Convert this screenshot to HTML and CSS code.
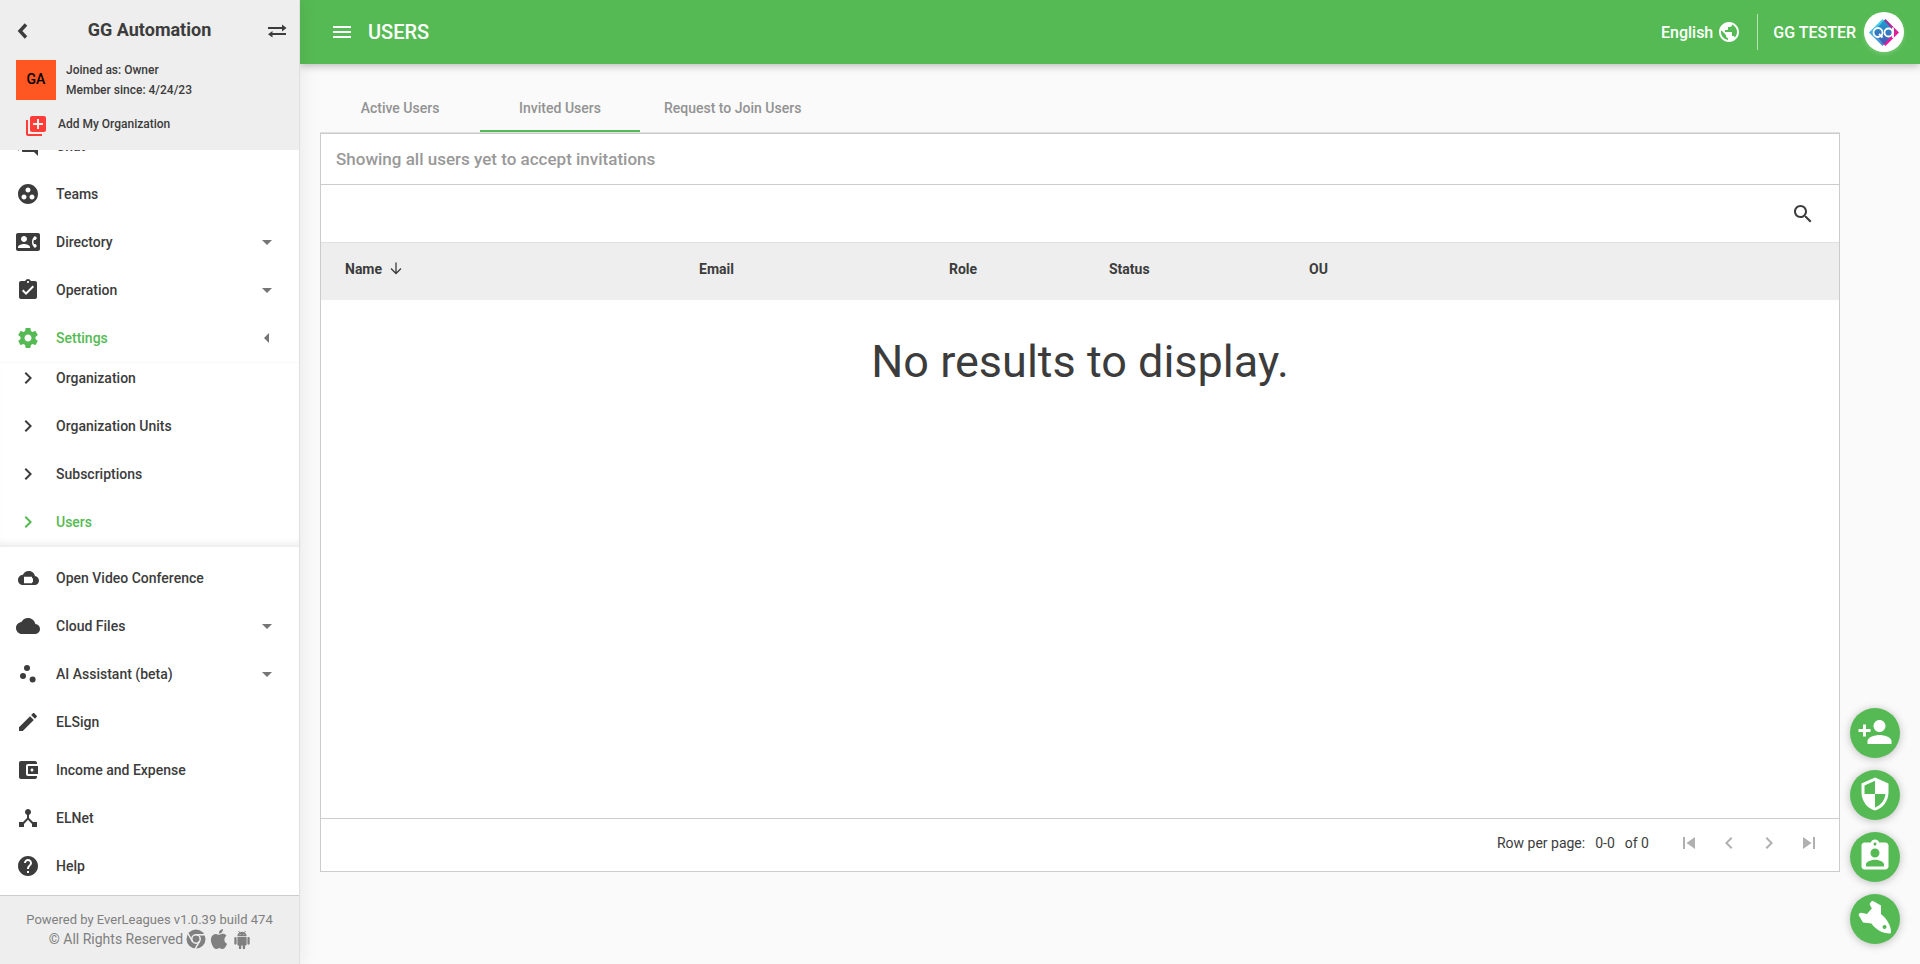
FILE: index.html
```html
<!DOCTYPE html>
<html lang="en">
<head>
<meta charset="utf-8">
<title>Users</title>
<link rel="stylesheet" href="styles.css">
</head>
<body>
<div class="app">
  <aside class="sidebar">
    <div class="org">
      <div class="org-bar">
        <button class="icon-btn" aria-label="Back"><svg class="icon" viewBox="0 0 24 24"><path class="stroke-bold" d="M16 5.500L10 12l6 6.500"/></svg></button>
        <h2 class="org-name">GG Automation</h2>
        <button class="icon-btn" aria-label="Switch organization"><svg class="icon" viewBox="0 0 24 24"><path d="M3 8h14V5.500L21.500 9 17 12.500V10H3zM21 14H7.500v-2L3 15.200l4.500 3.300V16H21z"/></svg></button>
      </div>
      <div class="org-info">
        <span class="org-badge">GA</span>
        <div class="org-lines"><span>Joined as: Owner</span><span>Member since: 4/24/23</span></div>
      </div>
      <button class="add-org">
        <svg class="icon red" viewBox="0 0 24 24"><path d="M4 6H2v14c0 1.100.9 2 2 2h14v-2H4V6zm16-4H8c-1.100 0-2 .9-2 2v12c0 1.100.9 2 2 2h12c1.100 0 2-.9 2-2V4c0-1.100-.9-2-2-2zm-1 9h-4v4h-2v-4H9V9h4V5h2v4h4v2z"/></svg>
        <span>Add My Organization</span>
      </button>
    </div>
    <nav class="nav">
      <div class="nav-list">
        <a class="nav-item" href="#"><svg class="icon" viewBox="0 0 24 24"><path d="M21 6h-2v9H6v2c0 .55.45 1 1 1h11l4 4V7c0-.55-.45-1-1-1zm-4 6V3c0-.55-.45-1-1-1H3c-.55 0-1 .45-1 1v14l4-4h10c.55 0 1-.45 1-1z"/></svg><span class="label">Chat</span></a>
        <a class="nav-item" href="#"><svg class="icon" viewBox="0 0 24 24"><path d="M12 2C6.480 2 2 6.480 2 12s4.480 10 10 10 10-4.480 10-10S17.520 2 12 2zM8 17.500c-1.380 0-2.500-1.120-2.500-2.500s1.120-2.500 2.500-2.500 2.500 1.120 2.500 2.500-1.120 2.500-2.500 2.500zM9.500 8c0-1.380 1.120-2.500 2.500-2.500s2.500 1.120 2.500 2.500-1.120 2.500-2.500 2.500S9.500 9.380 9.500 8zm6.500 9.500c-1.380 0-2.500-1.120-2.500-2.500s1.120-2.500 2.500-2.500 2.500 1.120 2.500 2.500-1.120 2.500-2.500 2.500z"/></svg><span class="label">Teams</span></a>
        <a class="nav-item" href="#"><svg class="icon" viewBox="0 0 24 24"><path d="M22 3H2C.9 3 0 3.900 0 5v14c0 1.100.9 2 2 2h20c1.100 0 1.990-.9 1.990-2L24 5c0-1.100-.9-2-2-2zM8 6c1.660 0 3 1.340 3 3s-1.340 3-3 3-3-1.340-3-3 1.340-3 3-3zm6 12H2v-1c0-2 4-3.100 6-3.100s6 1.100 6 3.100v1zm3.850-4h1.640L21 16l-1.990 1.990c-1.310-.98-2.280-2.380-2.730-3.990-.18-.64-.28-1.310-.28-2s.1-1.360.28-2c.45-1.620 1.420-3.010 2.730-3.990L21 8l-1.510 2h-1.640c-.22.63-.35 1.300-.35 2s.13 1.370.35 2z"/></svg><span class="label">Directory</span><svg class="icon arrow" viewBox="0 0 24 24"><path d="M7 10l5 5 5-5z"/></svg></a>
        <a class="nav-item" href="#"><svg class="icon" viewBox="0 0 24 24"><path d="M19 3h-4.180C14.400 1.840 13.300 1 12 1c-1.300 0-2.400.84-2.820 2H5c-1.100 0-2 .9-2 2v14c0 1.100.9 2 2 2h14c1.100 0 2-.9 2-2V5c0-1.100-.9-2-2-2zm-7 0c.55 0 1 .45 1 1s-.45 1-1 1-1-.45-1-1 .45-1 1-1zm-2 14l-4-4 1.410-1.410L10 14.170l6.590-6.590L18 9l-8 8z"/></svg><span class="label">Operation</span><svg class="icon arrow" viewBox="0 0 24 24"><path d="M7 10l5 5 5-5z"/></svg></a>
        <a class="nav-item active" href="#"><svg class="icon" viewBox="0 0 24 24"><path d="M19.430 12.980c.04-.32.070-.64.070-.98s-.03-.66-.07-.98l2.110-1.650c.19-.15.240-.42.120-.64l-2-3.460c-.12-.22-.39-.3-.61-.22l-2.490 1c-.52-.4-1.080-.73-1.690-.98l-.38-2.650C14.460 2.180 14.250 2 14 2h-4c-.25 0-.46.180-.49.420l-.38 2.650c-.61.250-1.170.590-1.690.98l-2.490-1c-.23-.09-.49 0-.61.220l-2 3.460c-.13.220-.07.490.12.640l2.110 1.650c-.04.320-.07.650-.07.980s.03.660.07.980l-2.110 1.650c-.19.150-.24.420-.12.640l2 3.460c.12.220.39.300.61.220l2.490-1c.52.400 1.080.730 1.690.980l.38 2.650c.03.240.24.420.49.420h4c.25 0 .46-.18.490-.42l.38-2.650c.61-.25 1.170-.59 1.690-.98l2.490 1c.23.090.49 0 .61-.22l2-3.460c.12-.22.070-.49-.12-.64l-2.110-1.650zM12 15.500c-1.930 0-3.500-1.570-3.500-3.500s1.570-3.500 3.500-3.500 3.500 1.570 3.500 3.500-1.570 3.500-3.500 3.500z"/></svg><span class="label">Settings</span><svg class="icon arrow" viewBox="0 0 24 24"><path d="M14 7l-5 5 5 5z"/></svg></a>
        <div class="subnav">
          <a class="sub-item" href="#"><svg class="icon" viewBox="0 0 24 24"><path d="M10 6L8.590 7.410 13.170 12l-4.580 4.590L10 18l6-6z"/></svg><span class="label">Organization</span></a>
          <a class="sub-item" href="#"><svg class="icon" viewBox="0 0 24 24"><path d="M10 6L8.590 7.410 13.170 12l-4.580 4.590L10 18l6-6z"/></svg><span class="label">Organization Units</span></a>
          <a class="sub-item" href="#"><svg class="icon" viewBox="0 0 24 24"><path d="M10 6L8.590 7.410 13.170 12l-4.580 4.590L10 18l6-6z"/></svg><span class="label">Subscriptions</span></a>
          <a class="sub-item active" href="#"><svg class="icon" viewBox="0 0 24 24"><path d="M10 6L8.590 7.410 13.170 12l-4.580 4.590L10 18l6-6z"/></svg><span class="label">Users</span></a>
        </div>
        <a class="nav-item" href="#"><svg class="icon" viewBox="0 0 24 24"><path fill-rule="evenodd" d="M18.900 9.900C18.300 6.900 15.600 5 12.600 5c-2.600 0-4.700 1.600-5.700 3.700C4 8.900 2 11.300 2 13.900 2 16.900 4.300 19 7.200 19h11.500c2.400 0 4.300-2 4.300-4.500 0-2.400-1.800-4.400-4.100-4.600zM8 10.700h8v2l1-1v5l-1-1v1.500H8z"/></svg><span class="label">Open Video Conference</span></a>
        <a class="nav-item" href="#"><svg class="icon" viewBox="0 0 24 24"><path d="M19.350 10.040C18.670 6.590 15.640 4 12 4 9.110 4 6.600 5.640 5.350 8.040 2.340 8.360 0 10.910 0 14c0 3.310 2.690 6 6 6h13c2.760 0 5-2.240 5-5 0-2.640-2.050-4.780-4.650-4.960z"/></svg><span class="label">Cloud Files</span><svg class="icon arrow" viewBox="0 0 24 24"><path d="M7 10l5 5 5-5z"/></svg></a>
        <a class="nav-item" href="#"><svg class="icon" viewBox="0 0 24 24"><circle cx="7" cy="14" r="3"/><circle cx="11" cy="6" r="3"/><circle cx="16.600" cy="17.600" r="3"/></svg><span class="label">AI Assistant (beta)</span><svg class="icon arrow" viewBox="0 0 24 24"><path d="M7 10l5 5 5-5z"/></svg></a>
        <a class="nav-item" href="#"><svg class="icon" viewBox="0 0 24 24"><path d="M3 17.250V21h3.750L17.810 9.940l-3.750-3.750L3 17.250zM20.710 7.040c.39-.39.390-1.020 0-1.410l-2.340-2.340c-.39-.39-1.020-.39-1.410 0l-1.830 1.830 3.750 3.750 1.830-1.830z"/></svg><span class="label">ELSign</span></a>
        <a class="nav-item" href="#"><svg class="icon" viewBox="0 0 24 24"><path d="M21 18v1c0 1.100-.9 2-2 2H5c-1.110 0-2-.9-2-2V5c0-1.100.89-2 2-2h14c1.100 0 2 .9 2 2v1h-9c-1.110 0-2 .9-2 2v8c0 1.100.89 2 2 2h9zm-9-2h10V8H12v8zm4-2.500c-.83 0-1.500-.67-1.500-1.500s.67-1.500 1.500-1.500 1.500.67 1.500 1.500-.67 1.500-1.500 1.500z"/></svg><span class="label">Income and Expense</span></a>
        <a class="nav-item" href="#"><svg class="icon" viewBox="0 0 24 24"><path d="M17 16l-4-4V8.820C14.160 8.400 15 7.300 15 6c0-1.660-1.340-3-3-3S9 4.340 9 6c0 1.300.84 2.400 2 2.820V12l-4 4H3v5h5v-3.050l4-4.200 4 4.200V21h5v-5h-4z"/></svg><span class="label">ELNet</span></a>
        <a class="nav-item" href="#"><svg class="icon" viewBox="0 0 24 24"><path d="M12 2C6.480 2 2 6.480 2 12s4.480 10 10 10 10-4.480 10-10S17.520 2 12 2zm1 17h-2v-2h2v2zm2.070-7.750l-.9.92C13.450 12.900 13 13.500 13 15h-2v-.5c0-1.100.45-2.100 1.170-2.830l1.240-1.260c.37-.36.590-.86.590-1.410 0-1.100-.9-2-2-2s-2 .9-2 2H8c0-2.210 1.790-4 4-4s4 1.790 4 4c0 .88-.36 1.680-.93 2.250z"/></svg><span class="label">Help</span></a>
      </div>
    </nav>
    <footer class="side-foot">
      <div>Powered by EverLeagues v1.0.39 build 474</div>
      <div class="rights">
        <span>© All Rights Reserved</span>
        <svg class="brand" viewBox="0 0 20 20"><circle cx="10" cy="10" r="9.500"/><g class="gaps"><circle cx="10" cy="10" r="4.200"/><path d="M10 5.800h9M13.640 12.100l-4.500 7.790M6.360 12.100l-4.500-7.790"/></g></svg>
        <svg class="brand" viewBox="2 2 20 20"><path d="M18.710 19.500C17.880 20.740 17 21.950 15.660 21.970C14.320 22 13.890 21.180 12.370 21.180C10.840 21.180 10.370 21.950 9.100 22C7.790 22.050 6.800 20.680 5.960 19.470C4.250 17 2.940 12.450 4.700 9.390C5.570 7.870 7.130 6.910 8.820 6.880C10.100 6.860 11.320 7.750 12.110 7.750C12.890 7.750 14.370 6.680 15.920 6.840C16.570 6.870 18.390 7.100 19.560 8.820C19.470 8.880 17.390 10.100 17.410 12.630C17.440 15.650 20.060 16.660 20.090 16.670C20.060 16.740 19.670 18.110 18.710 19.500M13 3.500C13.730 2.670 14.940 2.040 15.940 2C16.070 3.170 15.600 4.350 14.900 5.190C14.210 6.040 13.070 6.700 11.950 6.610C11.800 5.460 12.360 4.260 13 3.500Z"/></svg>
        <svg class="brand" viewBox="-1 -2.500 26 26"><path d="M6 18c0 .55.45 1 1 1h1v3.500c0 .83.67 1.500 1.500 1.500s1.500-.67 1.500-1.500V19h2v3.500c0 .83.67 1.500 1.500 1.500s1.500-.67 1.500-1.500V19h1c.55 0 1-.45 1-1V8H6v10zM3.500 8C2.670 8 2 8.670 2 9.500v7c0 .83.67 1.500 1.500 1.500S5 17.330 5 16.500v-7C5 8.670 4.330 8 3.500 8zm17 0c-.83 0-1.500.67-1.500 1.500v7c0 .83.67 1.500 1.500 1.500s1.500-.67 1.500-1.500v-7c0-.83-.67-1.500-1.500-1.500zm-4.970-5.840l1.300-1.300c.2-.2.200-.51 0-.71-.2-.2-.51-.2-.71 0l-1.480 1.480C13.850 1.230 12.950 1 12 1c-.96 0-1.860.23-2.660.63L7.850.15c-.2-.2-.51-.2-.71 0-.2.200-.2.510 0 .71l1.310 1.310C6.970 3.260 6 5.010 6 7h12c0-1.990-.97-3.750-2.470-4.840zM10 5H9V4h1v1zm5 0h-1V4h1v1z"/></svg>
      </div>
    </footer>
  </aside>

  <div class="page">
    <header class="topbar">
      <button class="icon-btn" aria-label="Toggle menu"><svg class="icon" viewBox="0 0 24 24"><path d="M3 18h18v-2H3v2zm0-5h18v-2H3v2zm0-7v2h18V6H3z"/></svg></button>
      <h1 class="page-title">USERS</h1>
      <button class="language"><span>English</span><svg class="icon" viewBox="0 0 24 24"><path d="M12 2C6.480 2 2 6.480 2 12s4.480 10 10 10 10-4.480 10-10S17.520 2 12 2zm-1 17.930c-3.950-.49-7-3.850-7-7.930 0-.62.080-1.210.210-1.790L9 15v1c0 1.100.9 2 2 2v1.930zm6.900-2.540c-.26-.81-1-1.390-1.900-1.390h-1v-3c0-.55-.45-1-1-1H8v-2h2c.55 0 1-.45 1-1V7h2c1.100 0 2-.9 2-2v-.41c2.930 1.190 5 4.060 5 7.410 0 2.080-.8 3.970-2.100 5.390z"/></svg></button>
      <button class="account">
        <span>GG TESTER</span>
        <span class="avatar">
          <svg viewBox="0 0 40 40">
            <defs>
              <linearGradient id="cyan" x1="0" y1="0" x2="0" y2="1"><stop offset="0" stop-color="#3fd8ea"/><stop offset="1" stop-color="#4a86cc"/></linearGradient>
              <linearGradient id="blue" x1="0" y1="0" x2="0" y2="1"><stop offset="0" stop-color="#1c9fd2"/><stop offset="1" stop-color="#4b55b4"/></linearGradient>
              <linearGradient id="pink" x1="0" y1="0" x2="0" y2="1"><stop offset="0" stop-color="#7a3a94"/><stop offset=".5" stop-color="#f01898"/><stop offset="1" stop-color="#f01898"/></linearGradient>
            </defs>
            <path fill="url(#cyan)" d="M18.500 7L5 20.500 18.500 34l3-3V10z"/>
            <path fill="url(#pink)" d="M21.500 7L35 20.500 21.500 34l-3-3V10z"/>
            <path fill="url(#blue)" d="M20 8.500l11 11.500-11 12.500L9 20z"/>
            <g fill="none" stroke="#fff" stroke-width="1.800"><circle cx="14" cy="20.500" r="4.500"/><path d="M15 22l3.500 3.500"/><circle cx="24.500" cy="20.500" r="4"/><path d="M29 15.500V26"/></g>
          </svg>
        </span>
      </button>
    </header>

    <main class="content">
      <div class="tabs" role="tablist">
        <button class="tab" role="tab">Active Users</button>
        <button class="tab selected" role="tab" aria-selected="true">Invited Users</button>
        <button class="tab" role="tab">Request to Join Users</button>
      </div>
      <section class="panel">
        <h3 class="panel-title">Showing all users yet to accept invitations</h3>
        <div class="toolbar">
          <button class="icon-btn" aria-label="Search"><svg class="icon" viewBox="0 0 24 24"><path d="M15.500 14h-.79l-.28-.27C15.410 12.590 16 11.110 16 9.500 16 5.910 13.090 3 9.500 3S3 5.910 3 9.500 5.910 16 9.500 16c1.610 0 3.090-.59 4.230-1.570l.27.28v.79l5 4.990L20.490 19l-4.990-5zm-6 0C7.010 14 5 11.990 5 9.500S7.010 5 9.500 5 14 7.010 14 9.500 11.990 14 9.500 14z"/></svg></button>
        </div>
        <table class="grid">
          <thead>
            <tr>
              <th class="c-name">Name<svg class="sort" viewBox="0 0 14 14"><path d="M7 1.500v11M2 7.500l5 5 5-5"/></svg></th>
              <th class="c-email">Email</th>
              <th class="c-role">Role</th>
              <th class="c-status">Status</th>
              <th>OU</th>
            </tr>
          </thead>
          <tbody>
            <tr><td class="empty" colspan="5">No results to display.</td></tr>
          </tbody>
        </table>
        <div class="pager">
          <span>Row per page:</span><span>0-0</span><span>of 0</span>
          <div class="pager-btns">
            <button class="page-btn" aria-label="First page"><svg class="icon" viewBox="0 0 24 24"><path d="M6 6h2v12H6zm3.500 6l8.500 6V6z"/></svg></button>
            <button class="page-btn" aria-label="Previous page"><svg class="icon" viewBox="0 0 24 24"><path d="M15.410 7.410L14 6l-6 6 6 6 1.410-1.410L10.830 12z"/></svg></button>
            <button class="page-btn" aria-label="Next page"><svg class="icon" viewBox="0 0 24 24"><path d="M10 6L8.590 7.410 13.170 12l-4.580 4.590L10 18l6-6z"/></svg></button>
            <button class="page-btn" aria-label="Last page"><svg class="icon" viewBox="0 0 24 24"><path d="M6 18l8.500-6L6 6v12zM16 6v12h2V6h-2z"/></svg></button>
          </div>
        </div>
      </section>
    </main>
  </div>

  <div class="fabs">
    <button class="fab" aria-label="Invite user"><svg viewBox="0 0 24 24"><path d="M15 12c2.210 0 4-1.790 4-4s-1.790-4-4-4-4 1.790-4 4 1.790 4 4 4zm-9-2V7H4v3H1v2h3v3h2v-3h3v-2H6zm9 4c-2.670 0-8 1.340-8 4v2h16v-2c0-2.660-5.330-4-8-4z"/></svg></button>
    <button class="fab" aria-label="Permissions"><svg viewBox="0 0 24 24"><path d="M12 1L3 5v6c0 5.550 3.840 10.740 9 12 5.160-1.260 9-6.450 9-12V5l-9-4zm0 10.990h7c-.53 4.120-3.280 7.790-7 8.940V12H5V6.300l7-3.110v8.800z"/></svg></button>
    <button class="fab" aria-label="Assign role"><svg viewBox="0 0 24 24"><path d="M19 3h-4.180C14.400 1.840 13.300 1 12 1c-1.300 0-2.400.84-2.820 2H5c-1.100 0-2 .9-2 2v14c0 1.100.9 2 2 2h14c1.100 0 2-.9 2-2V5c0-1.100-.9-2-2-2zm-7 0c.55 0 1 .45 1 1s-.45 1-1 1-1-.45-1-1 .45-1 1-1zm0 4c1.660 0 3 1.340 3 3s-1.340 3-3 3-3-1.340-3-3 1.340-3 3-3zm6 12H6v-1.400c0-2 4-3.100 6-3.100s6 1.100 6 3.100V19z"/></svg></button>
    <button class="fab" aria-label="Quick start"><svg viewBox="0 0 36 36"><path fill-rule="evenodd" d="M14.500 1.200q1-.8 2 0l7.500 4.300v8.500C30 19 34.300 26 34 32.500q0 1-1 1C25.500 33.500 18.500 29.500 14.500 23.500l-8.500-1L1.800 15.300q-.4-1.300.8-2l1.600-.5 5.800 1.200 4.800-5.500-2.300-4.500zM27.500 25a2 2 0 1 0 .1 0z"/></svg></button>
  </div>
</div>
</body>
</html>
```

FILE: styles.css
```css
* { box-sizing: border-box; }

body {
  margin: 0;
  font-family: Roboto, "Liberation Sans", sans-serif;
  font-size: 14px;
  color: #3c3c3c;
  background: #fafafa;
}

h1, h2, h3 { margin: 0; }

button {
  margin: 0;
  padding: 0;
  border: 0;
  background: none;
  color: inherit;
  font: inherit;
  cursor: pointer;
}

a { color: inherit; text-decoration: none; }

svg { display: block; fill: currentColor; }

.icon { width: 24px; height: 24px; flex: none; }

.stroke-bold { fill: none; stroke: currentColor; stroke-width: 3.4; }

.app { display: flex; height: 100vh; }

/* Sidebar */
.sidebar {
  display: flex;
  flex-direction: column;
  width: 300px;
  flex: none;
  background: #fff;
  border-right: 1px solid #e0e0e0;
  box-shadow: 2px 0 16px rgba(0, 0, 0, .07);
  z-index: 2;
}

.org { height: 150px; flex: none; background: #eee; }

.org-bar {
  display: flex;
  align-items: center;
  justify-content: space-between;
  height: 60px;
  padding: 2px 10px 0;
}

.org-name { font-size: 18px; font-weight: 700; line-height: 24px; padding-bottom: 2px; }

.org-info { display: flex; gap: 10px; padding: 0 16px; }

.org-badge {
  width: 40px;
  height: 40px;
  background: #ff5722;
  color: #000;
  font-weight: 500;
  line-height: 38px;
  text-align: center;
}

.org-lines {
  display: flex;
  flex-direction: column;
  font-size: 12px;
  font-weight: 500;
  line-height: 20px;
}

.add-org {
  display: flex;
  align-items: center;
  gap: 10px;
  padding: 14px 24px 0;
  font-size: 12px;
  font-weight: 500;
}

.add-org span { padding-bottom: 4px; }

.red { color: #ff3c38; }

.nav { flex: 1; min-height: 0; overflow: hidden; }

/* The list is scrolled part of the way down. */
.nav-list { margin-top: -28px; font-weight: 500; }

.nav-item, .sub-item {
  display: flex;
  align-items: center;
  gap: 16px;
  padding: 0 20px 0 16px;
}

.nav-item { height: 48px; }

.sub-item { height: 32px; }

.label { flex: 1; }

.arrow { color: #757575; }

.nav-item.active .icon:first-child, .nav-item.active .label, .sub-item.active { color: #55ba53; }

.subnav {
  display: flex;
  flex-direction: column;
  gap: 16px;
  margin-bottom: 7px;
  padding-bottom: 9px;
  box-shadow: inset 0 -8px 8px -6px rgba(0, 0, 0, .1), inset 0 2px 1px -1px rgba(0, 0, 0, .03);
}

.side-foot {
  height: 69px;
  flex: none;
  padding-top: 14px;
  border-top: 1px solid #ccc;
  background: #eee;
  color: #808080;
  font-size: 13px;
  line-height: 20px;
  text-align: center;
}

.rights {
  display: flex;
  justify-content: center;
  gap: 3px;
  margin-top: -1px;
  padding-left: 2px;
  font-size: 14px;
}

.brand { width: 20px; height: 20px; }

.gaps { fill: none; stroke: #eee; stroke-width: 1.5; }

/* Page */
.page { display: flex; flex: 1; min-width: 0; flex-direction: column; }

.topbar {
  display: flex;
  align-items: center;
  height: 64px;
  flex: none;
  padding: 0 16px 0 30px;
  background: #55ba53;
  color: #fff;
  box-shadow: 0 2px 8px rgba(0, 0, 0, .25);
}

.page-title { margin: 0 auto 0 14px; font-size: 20px; font-weight: 500; }

.language {
  display: flex;
  align-items: center;
  gap: 4px;
  height: 36px;
  padding-right: 16px;
  border-right: 1px solid rgba(255, 255, 255, .6);
  font-size: 16px;
  font-weight: 500;
}

.account {
  display: flex;
  align-items: center;
  gap: 8px;
  padding-left: 15px;
  font-size: 16px;
  font-weight: 500;
}

.avatar {
  width: 40px;
  height: 40px;
  border-radius: 50%;
  background: #fff;
  box-shadow: 0 2px 4px rgba(255, 255, 255, .2);
}

.content {
  display: flex;
  flex: 1;
  min-height: 0;
  flex-direction: column;
  padding: 20px 80px 92px 20px;
}

.tabs { display: flex; height: 49px; flex: none; border-bottom: 1px solid #e0e0e0; }

.tab {
  min-width: 160px;
  padding: 1px 24px 0;
  border-bottom: 2px solid transparent;
  color: #929292;
  font-weight: 500;
}

.tab.selected { border-bottom-color: #55ba53; }

.panel {
  display: flex;
  flex: 1;
  min-height: 0;
  flex-direction: column;
  border: 1px solid #ccc;
  background: #fff;
}

.panel-title {
  padding: 0 15px;
  border-bottom: 1px solid #ccc;
  color: #999;
  font-size: 17px;
  font-weight: 500;
  line-height: 50px;
}

.toolbar {
  display: flex;
  align-items: center;
  justify-content: flex-end;
  height: 57px;
  padding: 0 24px;
}

.grid { width: 100%; border-collapse: collapse; table-layout: fixed; }

.grid thead { background: #eee; box-shadow: inset 0 1px #e0e0e0; }

.grid th {
  height: 58px;
  padding: 0 0 4px;
  font-size: 14px;
  font-weight: 700;
  text-align: left;
}

.grid .c-name { width: 378px; padding-left: 24px; }
.c-email { width: 250px; }
.c-role { width: 160px; }
.c-status { width: 200px; }

.sort {
  display: inline-block;
  width: 14px;
  height: 14px;
  margin-left: 7px;
  vertical-align: -1px;
  fill: none;
  stroke: currentColor;
  stroke-width: 1.3;
}

.empty { padding: 34px 0 0; font-size: 45px; line-height: 56px; text-align: center; }

.pager {
  display: flex;
  align-items: center;
  justify-content: flex-end;
  gap: 10px;
  height: 53px;
  margin-top: auto;
  padding: 0 10px 4px 0;
  border-top: 1px solid #ccc;
}

.pager-btns { display: flex; margin-left: 10px; }

.page-btn { display: grid; place-items: center; width: 40px; height: 40px; color: #b0b0b0; }

/* Floating actions */
.fabs {
  position: absolute;
  right: 20px;
  bottom: 20px;
  display: flex;
  flex-direction: column;
  gap: 12px;
}

.fab {
  display: grid;
  place-items: center;
  width: 50px;
  height: 50px;
  padding-bottom: 3px;
  border-radius: 50%;
  background: #55ba53;
  color: #fff;
  box-shadow: 0 1px 8px rgba(0, 0, 0, .25);
}

.fab svg { width: 36px; height: 36px; }
```
